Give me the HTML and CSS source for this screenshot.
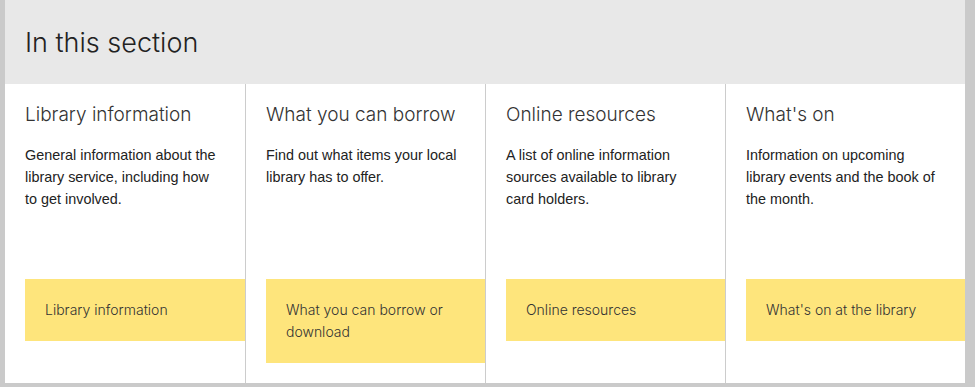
FILE: index.html
```html
<!DOCTYPE html>
<html lang="en">
<head>
    <meta charset="UTF-8">
    <meta name="viewport" content="width=device-width, initial-scale=1.0">
    <title>In this section</title>
    <link rel="stylesheet" href="styles.css">
</head>
<body>
    <div class="section">
        <h1 class="section-title">In this section</h1>
        <div class="columns">
            <div class="col">
                <h2>Library information</h2>
                <p class="desc">General information about the library service, including how to get involved.</p>
                <a class="btn" href="#">Library information</a>
            </div>
            <div class="col">
                <h2>What you can borrow</h2>
                <p class="desc">Find out what items your local library has to offer.</p>
                <a class="btn" href="#">What you can borrow or download</a>
            </div>
            <div class="col">
                <h2>Online resources</h2>
                <p class="desc">A list of online information sources available to library card holders.</p>
                <a class="btn" href="#">Online resources</a>
            </div>
            <div class="col">
                <h2>What's on</h2>
                <p class="desc">Information on upcoming library events and the book of the month.</p>
                <a class="btn" href="#">What's on at the library</a>
            </div>
        </div>
    </div>
</body>
</html>
```

FILE: styles.css
```css
body { margin: 0; padding-left: 5px; background: #cacaca; color: #333; font-family: "Liberation Sans", Arial, sans-serif; }
.section { width: 960px; background: #fff; }
.section-title { margin: 0; height: 84px; box-sizing: border-box; padding: 0 20px; background: #e8e8e8; font-family: Inter, sans-serif; font-weight: 300; font-size: 27px; line-height: 86px; color: #222; }
.columns { display: grid; grid-template-columns: repeat(4, 240px); }
.col { padding: 21px 0 20px 20px; }
.col + .col { border-left: 1px solid #cccccc; }
.col h2 { margin: 0; font-family: Inter, sans-serif; font-weight: 300; font-size: 19px; line-height: 20px; color: #333; }
.desc { width: 197px; margin: 19px 0 0; min-height: 135px; font-size: 14.4px; line-height: 22px; color: #222; }
.btn { display: block; padding: 20px; background: #fee57c; font-family: Inter, sans-serif; font-weight: 300; font-size: 14px; line-height: 22px; color: #333; text-decoration: none; }
```
